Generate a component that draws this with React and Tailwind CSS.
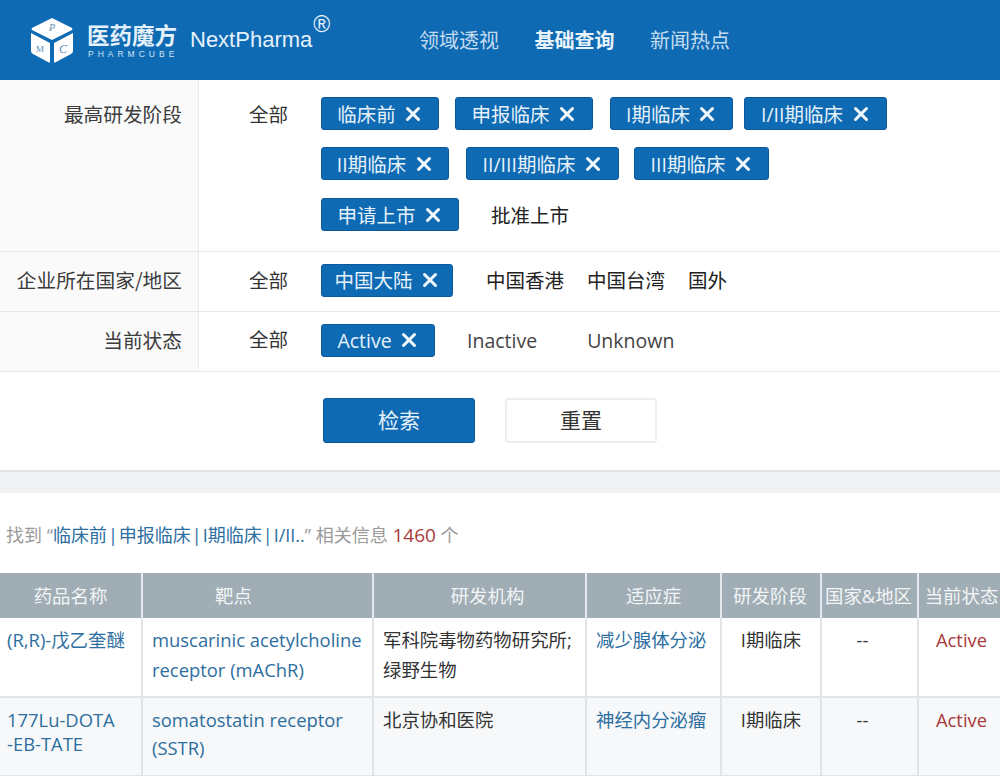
import { X } from "lucide-react";

const FONT = "font-['Open_Sans','Noto_Sans_CJK_SC',sans-serif]";
const CJK = "font-['Noto_Sans_CJK_SC',sans-serif]";

function Logo() {
  return (
    <svg width="44" height="46" viewBox="0 0 44 46" className="mr-[13px] shrink-0">
      <path d="M22 1 L42 11 Q43 12 42 13 L22 23 L2 13 Q1 12 2 11 Z" fill="#fff" />
      <path d="M1 16 L20 26 L20 45 Q20 46 18 45 L3 37 Q1 36 1 34 Z" fill="#fff" />
      <path d="M43 16 L24 26 L24 45 Q24 46 26 45 L41 37 Q43 36 43 34 Z" fill="#fff" />
      <text x="22" y="14" fontSize="10" fontStyle="italic" fontFamily="Liberation Serif, serif" fill="#5b8db5" textAnchor="middle">P</text>
      <text x="10" y="35" fontSize="9" fontFamily="Liberation Serif, serif" fill="#5b8db5" textAnchor="middle">M</text>
      <text x="33" y="36" fontSize="12" fontStyle="italic" fontFamily="Liberation Serif, serif" fill="#5b8db5" textAnchor="middle">C</text>
    </svg>
  );
}

function Header() {
  return (
    <header className="h-20 bg-[#0f6ab4] flex items-center pl-[30px] text-white">
      <Logo />
      <div className="w-[90px] shrink-0 mt-[2px]">
        <div className={`${CJK} text-[22.5px] font-bold leading-[24px] whitespace-nowrap text-[#e4f1fa] -mt-[1px]`}>医药魔方</div>
        <div className="font-['Liberation_Sans',sans-serif] text-[8.5px] tracking-[4px] leading-[9px] mt-[4px] text-[#cfe3f2] whitespace-nowrap pl-[1px]">PHARMCUBE</div>
      </div>
      <div className="ml-[13px] font-['Liberation_Sans',sans-serif] text-[22px] text-[#e4f1fa] flex items-start w-[140px] shrink-0 -mt-[1px]">
        NextPharma
        <span className="text-[23px] leading-none -mt-[10px] ml-[1px]">®</span>
      </div>
      <nav className={`${CJK} ml-[90px] flex gap-[35.5px] text-[20px] text-[#c3dcef]`}>
        <a className="-ml-[1px]">领域透视</a>
        <a className="font-bold text-[#e8f3fb]">基础查询</a>
        <a>新闻热点</a>
      </nav>
    </header>
  );
}

function Tag({ label, className = "" }) {
  return (
    <span className={`h-[33px] inline-flex items-center justify-center pr-[2px] bg-[#0f6ab4] border border-[#0c5a9b] rounded-[3px] text-[#e6f2fa] ${className}`}>
      <span className="whitespace-nowrap pt-[2px]">{label}</span>
      <span className="ml-[10px] w-[15px] shrink-0 flex justify-center">
        <X size={22} strokeWidth={3.3} className="shrink-0 text-[#f2f8fc]" />
      </span>
    </span>
  );
}

function FilterRow({ label, className = "", children }) {
  return (
    <div className={`flex border-b border-[#e8e8e8] ${className}`}>
      <div className={`${CJK} w-[199px] shrink-0 bg-[#fafafa] border-r border-[#ececec] text-right pr-[16px] text-[19.7px] text-[#3c3c3c] whitespace-nowrap`}>
        {label}
      </div>
      {children}
    </div>
  );
}

function Filters() {
  return (
    <section className={`${FONT} text-[19.5px] h-[392px] bg-white border-b-2 border-[#e4e5e7]`}>
      <FilterRow label={<div className="pt-[19px] leading-[30px]">最高研发阶段</div>} className="h-[172px]">
        <div className="pl-[50px] pt-[20px] w-[122px] leading-[30px] text-[#333]">全部</div>
        <div className="flex flex-col pt-[17px]">
          <div className="flex gap-4">
            <Tag label="临床前" className="w-[118px]" />
            <Tag label="申报临床" className="w-[138px]" />
            <Tag label="I期临床" className="w-[123px] ml-[1px]" />
            <Tag label="I/II期临床" className="w-[143px] -ml-[5px]" />
          </div>
          <div className="flex gap-4 mt-[17px]">
            <Tag label="II期临床" className="w-[128px]" />
            <Tag label="II/III期临床" className="w-[153px] ml-[1px]" />
            <Tag label="III期临床" className="w-[135px] -ml-[1px]" />
          </div>
          <div className="flex items-center mt-[18px]">
            <Tag label="申请上市" className="w-[138px]" />
            <span className="ml-[32px] mt-[2px] text-[#222]">批准上市</span>
          </div>
        </div>
      </FilterRow>
      <FilterRow label={<div className="leading-[56px]">企业所在国家/地区</div>} className="h-[60px]">
        <div className="pl-[50px] w-[122px] leading-[58px] text-[#333]">全部</div>
        <div className="flex items-center text-[#222] pb-[3px]">
          <Tag label="中国大陆" className="w-[132px]" />
          <span className="ml-[33px] mt-[2px]">中国香港</span>
          <span className="ml-[23px] mt-[2px]">中国台湾</span>
          <span className="ml-[23px] mt-[2px]">国外</span>
        </div>
      </FilterRow>
      <FilterRow label={<div className="leading-[56px]">当前状态</div>} className="h-[60px]">
        <div className="pl-[50px] w-[122px] leading-[56px] text-[#333]">全部</div>
        <div className="flex items-center text-[#444] pb-[3px]">
          <Tag label="Active" className="w-[114px]" />
          <span className="ml-[32px] mt-[2px]">Inactive</span>
          <span className="ml-[50px] mt-[2px]">Unknown</span>
        </div>
      </FilterRow>
      <div className="flex pl-[323px] gap-[30px] pt-[26px] text-[21px]">
        <button className="w-[152px] h-[45px] bg-[#0f6ab4] border border-[#0c5a9b] rounded-[3px] text-[#e6f2fa]">检索</button>
        <button className="w-[152px] h-[45px] bg-white border-2 border-[#eeeeee] rounded-[3px] text-[#333]">重置</button>
      </div>
    </section>
  );
}

// header titles are not quite centred over their columns in the reference
const HEAD = [
  ["药品名称", "w-[142px]"],
  ["靶点", "w-[231px] pr-[48px]"],
  ["研发机构", "w-[213px] pl-[16px]"],
  ["适应症", "w-[135px]"],
  ["研发阶段", "w-[100px] pr-[2px]"],
  ["国家&地区", "w-[97px] pr-[2px]"],
  ["当前状态", "w-[82px] pl-[4px]"],
];

const ROWS = [
  {
    name: ["(R,R)-戊乙奎醚"],
    target: "muscarinic acetylcholine receptor (mAChR)",
    targetClass: "pt-[7px] leading-[30px]",
    org: "军科院毒物药物研究所;绿野生物",
    indication: "减少腺体分泌",
  },
  {
    name: ["177Lu-DOTA", "-EB-TATE"],
    target: "somatostatin receptor (SSTR)",
    targetClass: "pt-[8px] leading-[28px]",
    org: "北京协和医院",
    indication: "神经内分泌瘤",
    alt: true,
  },
];

function Results() {
  return (
    <section className={`${FONT} mt-[21px] bg-white`}>
      <p className="h-[80px] pl-[6px] pt-[29px] leading-[26px] text-[18px] text-[#9a9a9a] whitespace-nowrap">
        找到 “<span className="text-[#2c6e9f]">临床前<span className="px-[1px]">|</span>申报临床<span className="px-[1px]">|</span>I期临床<span className="px-[1px]">|</span>I/II..</span>” 相关信息 <span className="text-[#a83a3a] text-[19px]">1460</span> 个
      </p>
      <table className="w-[1000px] table-fixed border-collapse text-[18.4px]">
        <thead>
          <tr className="h-[45px] bg-[#a0adb5] text-[#f2f5f6]">
            {HEAD.map(([title, width]) => (
              <th key={title} className={`${width} font-normal pt-[1px] border-r-2 border-[#e6e9eb] whitespace-nowrap last:border-r-0`}>
                {title}
              </th>
            ))}
          </tr>
        </thead>
        <tbody>
          {ROWS.map((r) => (
            <tr key={r.target} className={`h-[79px] border-b-2 border-[#e3e4e6] align-top ${r.alt ? "bg-[#f7f8f9]" : "bg-white"}`}>
              <td className="border-r-2 border-[#e3e4e6] pl-[7px] pr-1 pt-[10px] leading-[24px] text-[#2c6e9f]">
                {r.name.map((line) => (
                  <div key={line}>{line}</div>
                ))}
              </td>
              <td className={`border-r-2 border-[#e3e4e6] pl-[9px] pr-1 text-[#2c6e9f] ${r.targetClass}`}>{r.target}</td>
              <td className="border-r-2 border-[#e3e4e6] pl-[9px] pr-1 pt-[7px] leading-[30px] text-[#333]">{r.org}</td>
              <td className="border-r-2 border-[#e3e4e6] pl-[9px] pt-[7px] leading-[30px] text-[#2c6e9f] whitespace-nowrap">{r.indication}</td>
              <td className="border-r-2 border-[#e3e4e6] text-center pt-[7px] leading-[30px] text-[#333]">I期临床</td>
              <td className="border-r-2 border-[#e3e4e6] text-center pr-[14px] pt-[7px] leading-[30px] text-[#333]">--</td>
              <td className="text-center pl-[4px] pt-[7px] leading-[30px] text-[#a83a3a]">Active</td>
            </tr>
          ))}
        </tbody>
      </table>
    </section>
  );
}

export default function App() {
  return (
    <div className="w-[1000px] h-[776px] overflow-hidden bg-[#f1f2f4]">
      <Header />
      <Filters />
      <Results />
    </div>
  );
}
